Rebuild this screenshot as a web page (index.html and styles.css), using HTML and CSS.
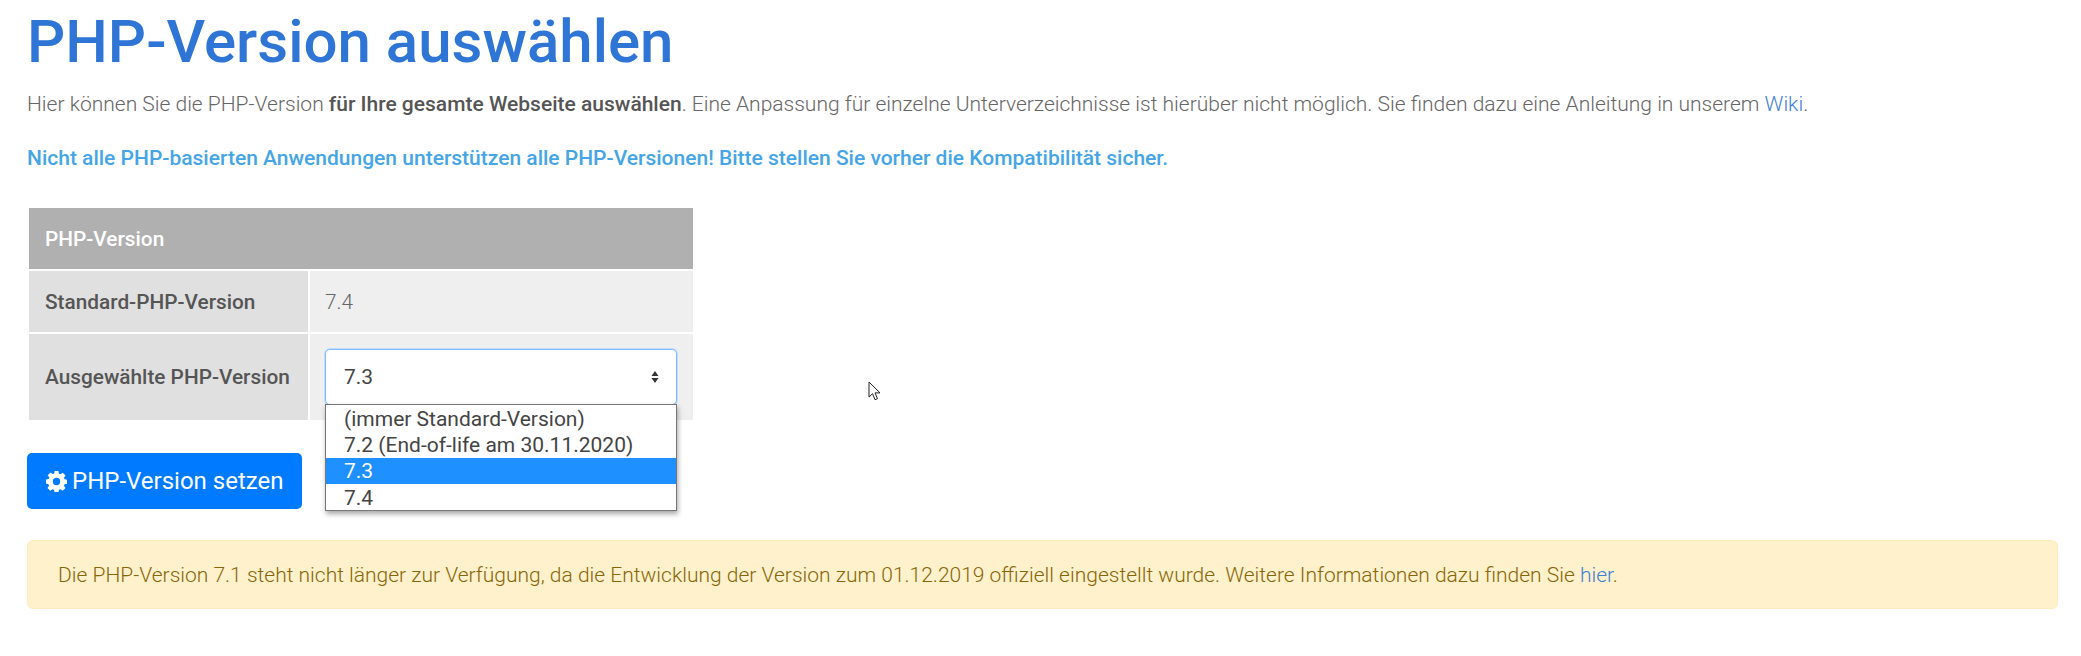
FILE: index.html
```html
<!DOCTYPE html>
<html>
    <head>
        <meta charset="utf-8"/>
        <title>PHP-Version auswählen</title>
        <link rel="stylesheet" href="styles.css">
    </head>
    <body>
        <h1 class="page_title">PHP-Version auswählen</h1>
        <p class="intro_text">Hier können Sie die PHP-Version <b>für Ihre gesamte Webseite auswählen</b>. Eine Anpassung für einzelne Unterverzeichnisse ist hierüber nicht möglich. Sie finden dazu eine Anleitung in unserem <a href="#">Wiki</a>.</p>
        <p class="notice_text">Nicht alle PHP-basierten Anwendungen unterstützen alle PHP-Versionen! Bitte stellen Sie vorher die Kompatibilität sicher.</p>

        <div class="version_table">
            <div class="table_head">PHP-Version</div>
            <div class="table_row">
                <div class="row_label">Standard-PHP-Version</div>
                <div class="row_value">7.4</div>
            </div>
            <div class="table_row select_row">
                <div class="row_label">Ausgewählte PHP-Version</div>
                <div class="row_value">
                    <div class="select_box">
                        <span>7.3</span>
                        <svg class="select_arrows" width="8" height="12" viewBox="0 0 8 12"><path d="M4 0 7.500 5H.5zM4 12 .5 7h7z" fill="#333"/></svg>
                    </div>
                    <ul class="select_list">
                        <li>(immer Standard-Version)</li>
                        <li>7.2 (End-of-life am 30.11.2020)</li>
                        <li class="selected">7.3</li>
                        <li>7.4</li>
                    </ul>
                </div>
            </div>
        </div>

        <button class="set_button" type="button">
            <svg class="gear_icon" width="21" height="21" viewBox="0 0 24 24"><path fill="#fff" fill-rule="evenodd" d="M9.800 0h4.400l.6 3.100 1.700.7 2.700-1.800 3.100 3.100-1.800 2.700.7 1.700 3.100.6v4.400l-3.100.6-.7 1.700 1.800 2.700-3.100 3.100-2.700-1.800-1.700.7-.6 3.100H9.800l-.6-3.100-1.700-.7-2.700 1.800-3.100-3.100 1.800-2.700-.7-1.700L0 14.200V9.800l3.100-.6.7-1.700L2 4.800l3.100-3.100 2.700 1.800 1.700-.7zM12 7.800a4.200 4.200 0 1 0 0 8.400 4.200 4.200 0 0 0 0-8.400z"/></svg>
            PHP-Version setzen
        </button>

        <div class="warning_box">Die PHP-Version 7.1 steht nicht länger zur Verfügung, da die Entwicklung der Version zum 01.12.2019 offiziell eingestellt wurde. Weitere Informationen dazu finden Sie <a href="#">hier</a>.</div>

        <svg class="mouse_cursor" width="14" height="20" viewBox="0 0 14 20"><path d="M1 1v15l3.500-3.300 2.500 6 2.500-1-2.500-5.800H12z" fill="#fff" stroke="#222" stroke-width="1"/></svg>
    </body>
</html>
```

FILE: styles.css
```css
body {
    margin: 0;
    padding: 0 23px 0 27px;
    background: #fff;
    color: #666;
    font-family: Roboto, sans-serif;
    font-size: 21px;
    font-weight: 300;
}
a {
    color: #3f7fd6;
    text-decoration: none;
}
.page_title {
    margin: 0;
    padding-top: 9px;
    color: #2f75d6;
    font-size: 60px;
    font-weight: 500;
    line-height: 66px;
}
.intro_text {
    margin: 16px 0 0;
    line-height: 27px;
}
.intro_text b {
    color: #555;
    font-weight: 500;
}
.notice_text {
    margin: 27px 0 0;
    color: #45a5e6;
    font-weight: 500;
    line-height: 27px;
}
.version_table {
    width: 664px;
    margin: 36px 0 0 2px;
    display: flex;
    flex-direction: column;
    gap: 2px;
    font-size: 20.800px;
}
.table_head {
    height: 61px;
    padding-left: 16px;
    background: #b0b0b0;
    color: #fff;
    font-weight: 500;
    line-height: 62px;
}
.table_row {
    display: flex;
    gap: 2px;
    height: 61px;
}
.select_row {
    height: 86px;
}
.row_label {
    width: 279px;
    box-sizing: border-box;
    padding-left: 16px;
    background: #e0e0e0;
    color: #555;
    font-weight: 500;
    display: flex;
    align-items: center;
}
.row_value {
    flex: 1;
    padding-left: 15px;
    background: #efefef;
    color: #666;
    display: flex;
    align-items: center;
    position: relative;
}
.select_box {
    width: 352px;
    height: 56px;
    box-sizing: border-box;
    padding: 0 17px 0 18px;
    background: #fff;
    border: 1px solid #80bdff;
    border-radius: 5px;
    box-shadow: 0 0 0 1px rgba(128, 189, 255, 0.4);
    color: #444;
    font-size: 21px;
    font-weight: 400;
    display: flex;
    align-items: center;
    justify-content: space-between;
}
.select_list {
    position: absolute;
    left: 15px;
    top: 70px;
    width: 352px;
    box-sizing: border-box;
    margin: 0;
    padding: 0;
    list-style: none;
    background: #fff;
    border: 1px solid #777;
    box-shadow: 1px 3px 5px rgba(0, 0, 0, 0.35);
    color: #444;
    font-size: 21px;
    font-weight: 400;
}
.select_list li {
    height: 26.250px;
    padding-left: 18px;
    line-height: 28px;
}
.select_list .selected {
    background: #1e90ff;
    color: #fff;
    line-height: 26px;
}
.set_button {
    display: flex;
    align-items: center;
    gap: 5px;
    width: 275px;
    height: 56px;
    margin: 33px 0 0;
    padding: 0 0 0 19px;
    background: #007bff;
    border: 0;
    border-radius: 5px;
    color: #fff;
    font-family: Roboto, sans-serif;
    font-size: 24px;
    font-weight: 400;
}
.warning_box {
    height: 69px;
    margin-top: 31px;
    padding-left: 30px;
    background: #fef1cc;
    border: 1px solid #feecbc;
    border-radius: 6px;
    box-sizing: border-box;
    color: #8a6508;
    line-height: 68px;
}
.mouse_cursor {
    position: absolute;
    left: 868px;
    top: 381px;
}
```
